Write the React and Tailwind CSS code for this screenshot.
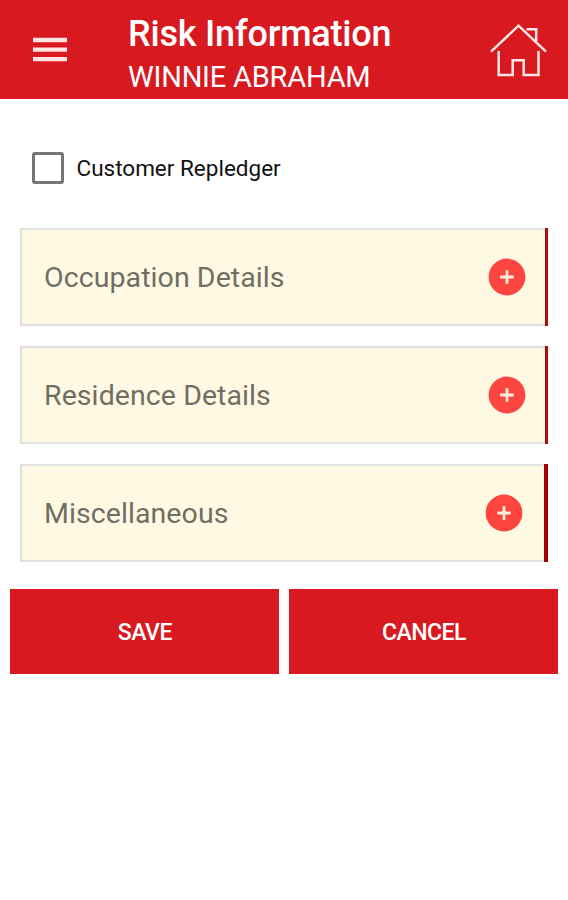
const sections = [
  { label: 'Occupation Details', bar: 'w-[3px] bg-[#a80e10]', plus: 'mr-[19px]' },
  { label: 'Residence Details', bar: 'w-[3px] bg-[#a80e10]', plus: 'mr-[19px]' },
  { label: 'Miscellaneous', bar: 'w-1 bg-[#a30003]', plus: 'mr-[21px]' },
];

function MenuIcon() {
  return (
    <svg className="block h-[26px] w-[34px]" viewBox="0 0 34 26" stroke="#ffe4e4" strokeWidth="4.3">
      <path d="M0 3h34M0 12.6h34M0 22.2h34" />
    </svg>
  );
}

function HomeIcon() {
  return (
    <svg className="block h-[54px] w-[58px]" viewBox="0 0 58 54" fill="none" stroke="#ffe6e6" strokeWidth="2.5">
      <path d="M2 28.7 29.5 2.7 57 28.7" />
      <path d="M37.5 6.2h9.7v12" />
      <path d="M9.7 28v24h14V37.2h11V52h14.8V28" />
    </svg>
  );
}

function PlusBadge({ className }) {
  return (
    <svg className={`block h-[38px] w-[38px] shrink-0 ${className}`} viewBox="0 0 38 38">
      <circle cx="19" cy="19" r="18.4" fill="#fc463f" />
      <path d="M12.2 19h13.6M19 12.2v13.6" stroke="#fff0dc" strokeWidth="2.8" />
    </svg>
  );
}

export default function App() {
  return (
    <div className="h-[900px] w-[568px] overflow-hidden bg-white font-['Roboto',sans-serif]">
      <header className="flex h-[99px] items-start bg-[#d8191f] text-white">
        <button className="mt-[37px] ml-[33px]" aria-label="Menu">
          <MenuIcon />
        </button>
        <div className="ml-[61px] w-[361px] pt-[13px] whitespace-nowrap">
          <h1 className="text-[36px] leading-[42px] font-medium tracking-[-0.2px]"><span>Risk Information</span></h1>
          <p className="mt-[5px] text-[29px] leading-[34px] tracking-[-0.22px]"><span>WINNIE ABRAHAM</span></p>
        </div>
        <div className="mt-[23px]">
          <HomeIcon />
        </div>
      </header>

      <label className="mt-[53px] ml-[32px] flex h-[32px] items-center">
        <span className="h-[32px] w-[32px] rounded-[3px] border-[3px] border-[#757575]" />
        <span className="ml-[12.5px] text-[22.5px] leading-[32px] text-[#111]">Customer Repledger</span>
      </label>

      <main className="mx-[20px] mt-[44px] flex flex-col gap-[20px]">
        {sections.map((s) => (
          <section key={s.label} className="flex h-[98px]">
            <div className="flex flex-1 items-center justify-between border-y-2 border-l-2 border-[#e0e0e0] bg-[#fff9e3] pl-[22px]">
              <span className="pt-[2px] text-[28.5px] leading-[34px] tracking-[0.08px] text-[#706e63]">{s.label}</span>
              <PlusBadge className={s.plus} />
            </div>
            <div className={s.bar} />
          </section>
        ))}
      </main>

      <div className="mt-[27px] ml-[10.4px] flex gap-[10px] text-[23px] leading-[28px] font-medium tracking-[-0.5px] text-white">
        <button className="h-[85px] w-[269px] bg-[#d8191f] pt-[2px]"><span>SAVE</span></button>
        <button className="h-[85px] w-[269px] bg-[#d8191f] pt-[2px]"><span>CANCEL</span></button>
      </div>
    </div>
  );
}
